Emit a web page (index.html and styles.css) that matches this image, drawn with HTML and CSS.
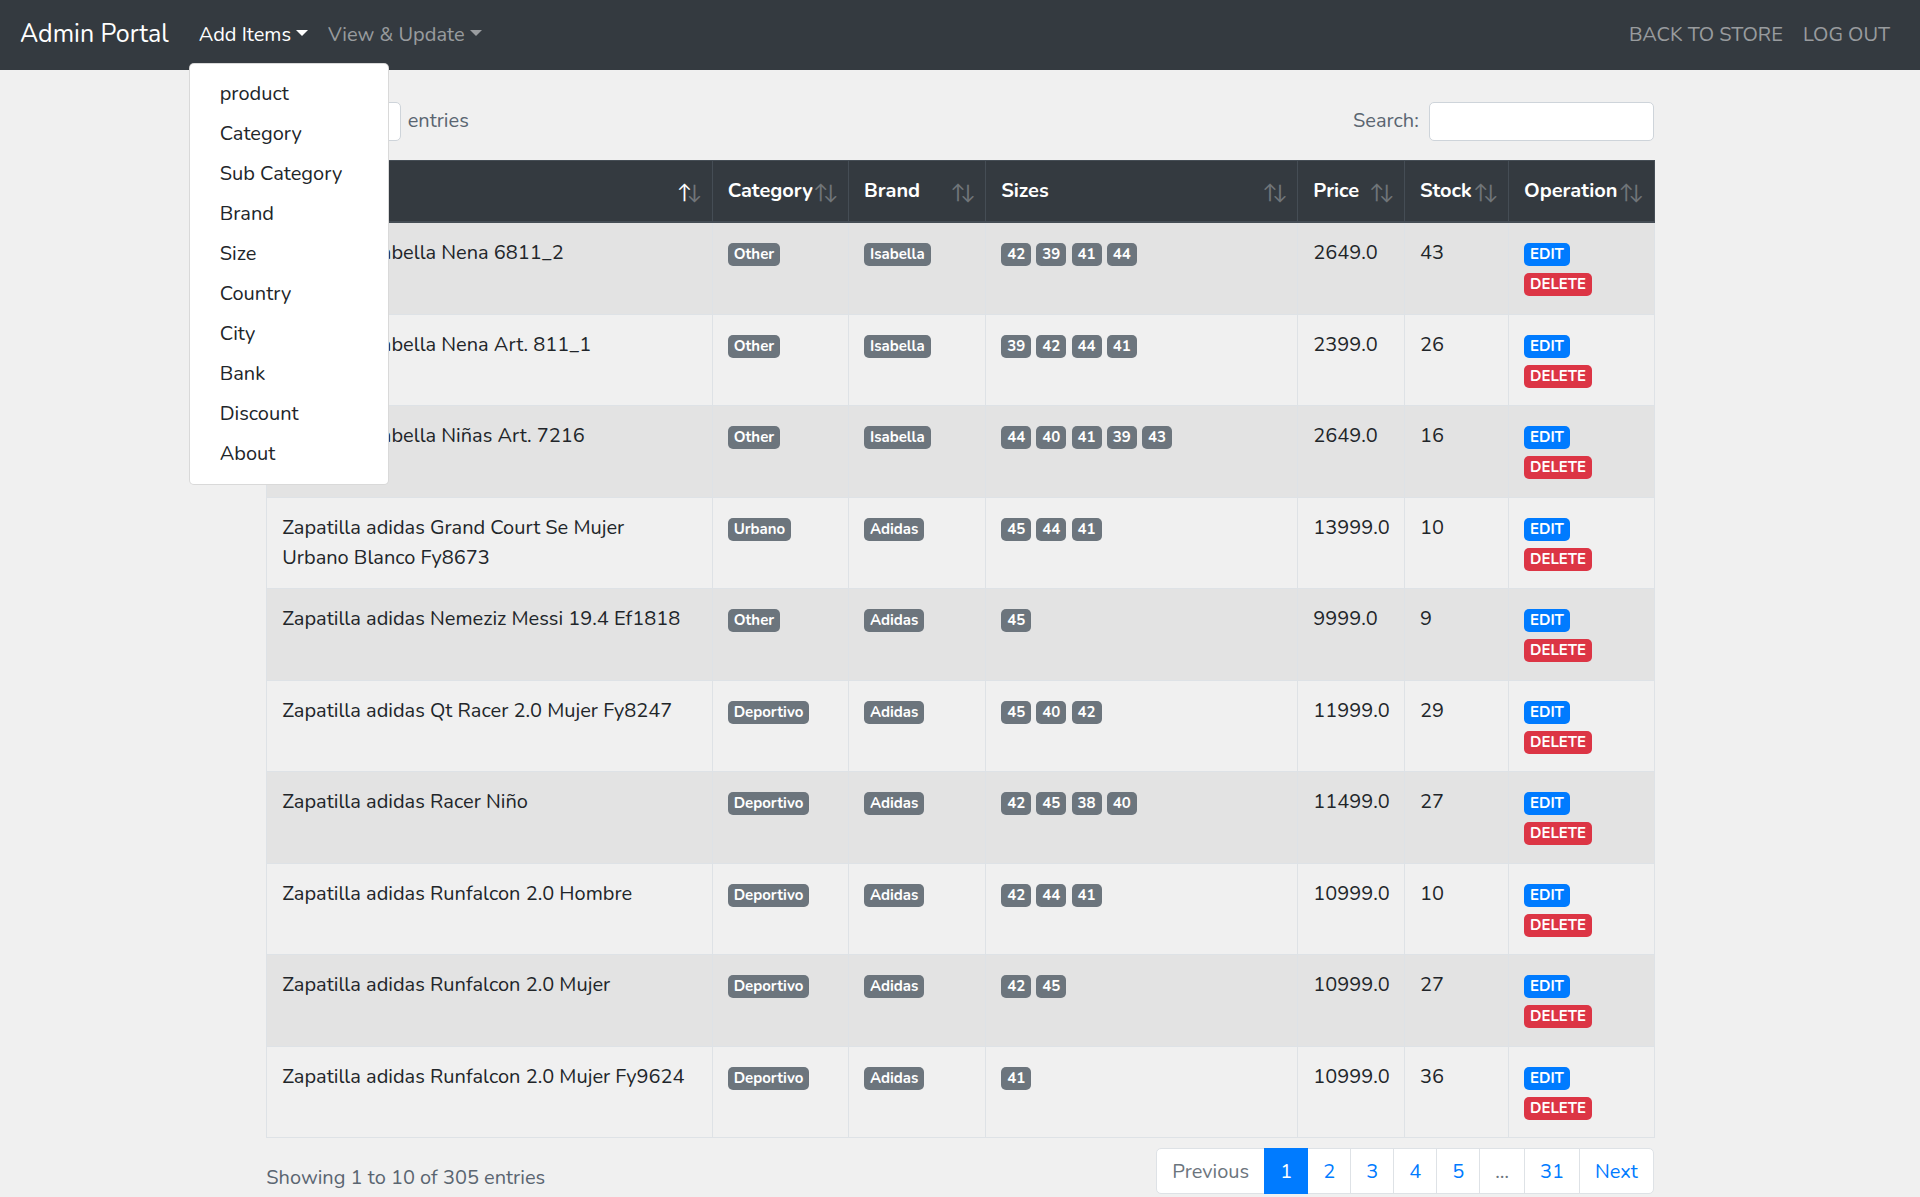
FILE: index.html
```html
<!DOCTYPE html>
<html lang="es">
<head>
<meta charset="utf-8">
<title>Admin Portal</title>
<link rel="stylesheet" href="styles.css">
</head>
<body>
<nav class="navbar">
  <a class="brand" href="#">Admin Portal</a>
  <ul class="nav nav-left">
    <li class="nav-item dropdown">
      <a class="nav-link active" href="#">Add Items<span class="caret"></span></a>
      <div class="dropdown-menu">
        <a class="dropdown-item" href="#">product</a>
        <a class="dropdown-item" href="#">Category</a>
        <a class="dropdown-item" href="#">Sub Category</a>
        <a class="dropdown-item" href="#">Brand</a>
        <a class="dropdown-item" href="#">Size</a>
        <a class="dropdown-item" href="#">Country</a>
        <a class="dropdown-item" href="#">City</a>
        <a class="dropdown-item" href="#">Bank</a>
        <a class="dropdown-item" href="#">Discount</a>
        <a class="dropdown-item" href="#">About</a>
      </div>
    </li>
    <li class="nav-item"><a class="nav-link" href="#">View &amp; Update<span class="caret"></span></a></li>
  </ul>
  <ul class="nav nav-right">
    <li class="nav-item"><a class="nav-link" href="#">BACK TO STORE</a></li>
    <li class="nav-item"><a class="nav-link" href="#">LOG OUT</a></li>
  </ul>
</nav>

<main class="container">
  <div class="dt-top">
    <label class="dt-length">Show <select class="dt-select"><option>10</option></select> entries</label>
    <label class="dt-filter">Search: <input class="dt-input" type="search"></label>
  </div>

  <table class="dt-table">
    <thead>
      <tr>
        <th class="c-name sort-asc">Name</th>
        <th class="c-cat sort">Category</th>
        <th class="c-brand sort">Brand</th>
        <th class="c-sizes sort">Sizes</th>
        <th class="c-price sort">Price</th>
        <th class="c-stock sort">Stock</th>
        <th class="c-op sort">Operation</th>
      </tr>
    </thead>
    <tbody>
      <tr>
        <td class="name">Zapatilla Isabella Nena 6811_2</td>
        <td><span class="badge b-gray">Other</span></td>
        <td><span class="badge b-gray">Isabella</span></td>
        <td><span class="badge b-gray">42</span> <span class="badge b-gray">39</span> <span class="badge b-gray">41</span> <span class="badge b-gray">44</span></td>
        <td>2649.0</td>
        <td>43</td>
        <td><span class="badge b-blue">EDIT</span><br><span class="badge b-red">DELETE</span></td>
      </tr>
      <tr>
        <td class="name">Zapatilla Isabella Nena Art. 811_1</td>
        <td><span class="badge b-gray">Other</span></td>
        <td><span class="badge b-gray">Isabella</span></td>
        <td><span class="badge b-gray">39</span> <span class="badge b-gray">42</span> <span class="badge b-gray">44</span> <span class="badge b-gray">41</span></td>
        <td>2399.0</td>
        <td>26</td>
        <td><span class="badge b-blue">EDIT</span><br><span class="badge b-red">DELETE</span></td>
      </tr>
      <tr>
        <td class="name">Zapatilla Isabella Niñas Art. 7216</td>
        <td><span class="badge b-gray">Other</span></td>
        <td><span class="badge b-gray">Isabella</span></td>
        <td><span class="badge b-gray">44</span> <span class="badge b-gray">40</span> <span class="badge b-gray">41</span> <span class="badge b-gray">39</span> <span class="badge b-gray">43</span></td>
        <td>2649.0</td>
        <td>16</td>
        <td><span class="badge b-blue">EDIT</span><br><span class="badge b-red">DELETE</span></td>
      </tr>
      <tr>
        <td class="name">Zapatilla adidas Grand Court Se Mujer Urbano Blanco Fy8673</td>
        <td><span class="badge b-gray">Urbano</span></td>
        <td><span class="badge b-gray">Adidas</span></td>
        <td><span class="badge b-gray">45</span> <span class="badge b-gray">44</span> <span class="badge b-gray">41</span></td>
        <td>13999.0</td>
        <td>10</td>
        <td><span class="badge b-blue">EDIT</span><br><span class="badge b-red">DELETE</span></td>
      </tr>
      <tr>
        <td class="name">Zapatilla adidas Nemeziz Messi 19.4 Ef1818</td>
        <td><span class="badge b-gray">Other</span></td>
        <td><span class="badge b-gray">Adidas</span></td>
        <td><span class="badge b-gray">45</span></td>
        <td>9999.0</td>
        <td>9</td>
        <td><span class="badge b-blue">EDIT</span><br><span class="badge b-red">DELETE</span></td>
      </tr>
      <tr>
        <td class="name">Zapatilla adidas Qt Racer 2.0 Mujer Fy8247</td>
        <td><span class="badge b-gray">Deportivo</span></td>
        <td><span class="badge b-gray">Adidas</span></td>
        <td><span class="badge b-gray">45</span> <span class="badge b-gray">40</span> <span class="badge b-gray">42</span></td>
        <td>11999.0</td>
        <td>29</td>
        <td><span class="badge b-blue">EDIT</span><br><span class="badge b-red">DELETE</span></td>
      </tr>
      <tr>
        <td class="name">Zapatilla adidas Racer Niño</td>
        <td><span class="badge b-gray">Deportivo</span></td>
        <td><span class="badge b-gray">Adidas</span></td>
        <td><span class="badge b-gray">42</span> <span class="badge b-gray">45</span> <span class="badge b-gray">38</span> <span class="badge b-gray">40</span></td>
        <td>11499.0</td>
        <td>27</td>
        <td><span class="badge b-blue">EDIT</span><br><span class="badge b-red">DELETE</span></td>
      </tr>
      <tr>
        <td class="name">Zapatilla adidas Runfalcon 2.0 Hombre</td>
        <td><span class="badge b-gray">Deportivo</span></td>
        <td><span class="badge b-gray">Adidas</span></td>
        <td><span class="badge b-gray">42</span> <span class="badge b-gray">44</span> <span class="badge b-gray">41</span></td>
        <td>10999.0</td>
        <td>10</td>
        <td><span class="badge b-blue">EDIT</span><br><span class="badge b-red">DELETE</span></td>
      </tr>
      <tr>
        <td class="name">Zapatilla adidas Runfalcon 2.0 Mujer</td>
        <td><span class="badge b-gray">Deportivo</span></td>
        <td><span class="badge b-gray">Adidas</span></td>
        <td><span class="badge b-gray">42</span> <span class="badge b-gray">45</span></td>
        <td>10999.0</td>
        <td>27</td>
        <td><span class="badge b-blue">EDIT</span><br><span class="badge b-red">DELETE</span></td>
      </tr>
      <tr>
        <td class="name">Zapatilla adidas Runfalcon 2.0 Mujer Fy9624</td>
        <td><span class="badge b-gray">Deportivo</span></td>
        <td><span class="badge b-gray">Adidas</span></td>
        <td><span class="badge b-gray">41</span></td>
        <td>10999.0</td>
        <td>36</td>
        <td><span class="badge b-blue">EDIT</span><br><span class="badge b-red">DELETE</span></td>
      </tr>
    </tbody>
  </table>

  <div class="dt-bottom">
    <div class="dt-info">Showing 1 to 10 of 305 entries</div>
    <ul class="pagination">
      <li class="page-item disabled"><a class="page-link" href="#">Previous</a></li>
      <li class="page-item active"><a class="page-link" href="#">1</a></li>
      <li class="page-item"><a class="page-link" href="#">2</a></li>
      <li class="page-item"><a class="page-link" href="#">3</a></li>
      <li class="page-item"><a class="page-link" href="#">4</a></li>
      <li class="page-item"><a class="page-link" href="#">5</a></li>
      <li class="page-item disabled"><a class="page-link" href="#">…</a></li>
      <li class="page-item"><a class="page-link" href="#">31</a></li>
      <li class="page-item"><a class="page-link" href="#">Next</a></li>
    </ul>
  </div>
</main>
</body>
</html>
```

FILE: styles.css
```css
* { box-sizing: border-box; }

html, body {
  margin: 0;
  padding: 0;
}

body {
  font-family: "Nunito", "Lato", "Open Sans", sans-serif;
  font-size: 20px;
  line-height: 30px;
  color: #212529;
  background: #f0f0f0;
  overflow: hidden;
}

a { text-decoration: none; }

/* ---------- navbar ---------- */
.navbar {
  display: flex;
  align-items: center;
  height: 70px;
  padding: 10px 20px;
  background: #343a40;
}

.brand {
  color: #fff;
  font-size: 25px;
  line-height: 37.5px;
  margin-right: 20px;
  white-space: nowrap;
}

.nav {
  display: flex;
  list-style: none;
  margin: 0;
  padding: 0;
}

.nav-right { margin-left: auto; }

.nav-item { position: relative; }

.nav-link {
  display: block;
  padding: 10px 10px;
  line-height: 30px;
  color: rgba(255, 255, 255, 0.5);
  white-space: nowrap;
}

.nav-link.active { color: #fff; }

.caret {
  display: inline-block;
  margin-left: 5px;
  vertical-align: 5px;
  border-top: 6px solid;
  border-left: 6px solid transparent;
  border-right: 6px solid transparent;
}

.dropdown-menu {
  position: absolute;
  top: calc(100% + 3px);
  left: 0;
  z-index: 10;
  min-width: 200px;
  padding: 10px 0;
  background: #fff;
  border: 1px solid rgba(0, 0, 0, 0.15);
  border-radius: 5px;
}

.dropdown-item {
  display: block;
  padding: 5px 30px;
  line-height: 30px;
  color: #212529;
  white-space: nowrap;
}

/* ---------- container ---------- */
.container {
  width: 1387.5px;
  margin: 0 auto;
  padding-top: 32px;
}

.dt-top {
  display: flex;
  justify-content: space-between;
  align-items: center;
  margin-bottom: 19px;
  color: #5a6570;
}

.dt-length, .dt-filter {
  display: flex;
  align-items: center;
  white-space: nowrap;
}

.dt-select {
  width: 78px;
  height: 38.75px;
  margin: 0 7px 0 5px;
  font: inherit;
  font-size: 17.5px;
  background: #fff;
  border: 1px solid #ced4da;
  border-radius: 5px;
  appearance: none;
  padding: 0 10px;
}

.dt-input {
  width: 225px;
  height: 38.75px;
  margin-left: 10px;
  background: #fff;
  border: 1px solid #ced4da;
  border-radius: 5px;
  font: inherit;
}

/* ---------- table ---------- */
.dt-table {
  width: 100%;
  table-layout: fixed;
  border-collapse: collapse;
  margin: 7.5px 0;
  border: 1px solid #dee2e6;
}

.dt-table th {
  position: relative;
  background: #343a40;
  color: #fff;
  font-weight: 700;
  text-align: left;
  vertical-align: bottom;
  padding: 15px 37.5px 15.5px 15px;
  border: 1px solid #454d55;
  border-bottom: 2px solid #454d55;
  white-space: nowrap;
}

.dt-table th::before,
.dt-table th::after {
  position: absolute;
  bottom: 16px;
  display: block;
  opacity: 0.3;
  font-weight: 400;
  font-size: 20px;
  line-height: 24px;
}

.dt-table th::before { content: "\2191"; right: 20px; }
.dt-table th::after { content: "\2193"; right: 10px; }
.dt-table th.sort-asc::before { opacity: 1; }

.c-name { width: 445.4px; }
.c-cat { width: 136.3px; }
.c-brand { width: 137.2px; }
.c-sizes { width: 312.2px; }
.c-price { width: 106.6px; }
.c-stock { width: 104.1px; }
.c-op { width: 145.6px; }

.dt-table td {
  padding: 15px 15px 15.5px;
  vertical-align: top;
  border: 1px solid #dee2e6;
}

.dt-table td.name { padding-right: 20px; }

.dt-table tbody tr:nth-child(odd) { background: rgba(0, 0, 0, 0.05); }

.badge {
  display: inline-block;
  padding: 4px 6px;
  font-size: 15px;
  font-weight: 700;
  line-height: 1;
  color: #fff;
  border-radius: 5px;
  vertical-align: baseline;
  white-space: nowrap;
}

.b-gray { background: #6c757d; }
.b-blue { background: #007bff; }
.b-red { background: #dc3545; }

/* ---------- bottom ---------- */
.dt-bottom {
  display: flex;
  justify-content: space-between;
  align-items: flex-start;
}

.dt-info {
  padding-top: 17px;
  color: #5a6570;
  white-space: nowrap;
}

.pagination {
  display: flex;
  list-style: none;
  margin: 2.5px 0;
  padding: 0;
}

.page-link {
  display: block;
  padding: 9.5px 15px;
  margin-left: -1px;
  line-height: 25px;
  color: #007bff;
  background: #fff;
  border: 1px solid #dee2e6;
}

.page-item:first-child .page-link {
  margin-left: 0;
  border-radius: 5px 0 0 5px;
}

.page-item:last-child .page-link { border-radius: 0 5px 5px 0; }

.page-item.active .page-link {
  position: relative;
  z-index: 1;
  color: #fff;
  background: #007bff;
  border-color: #007bff;
}

.page-item.disabled .page-link { color: #6c757d; }
```
